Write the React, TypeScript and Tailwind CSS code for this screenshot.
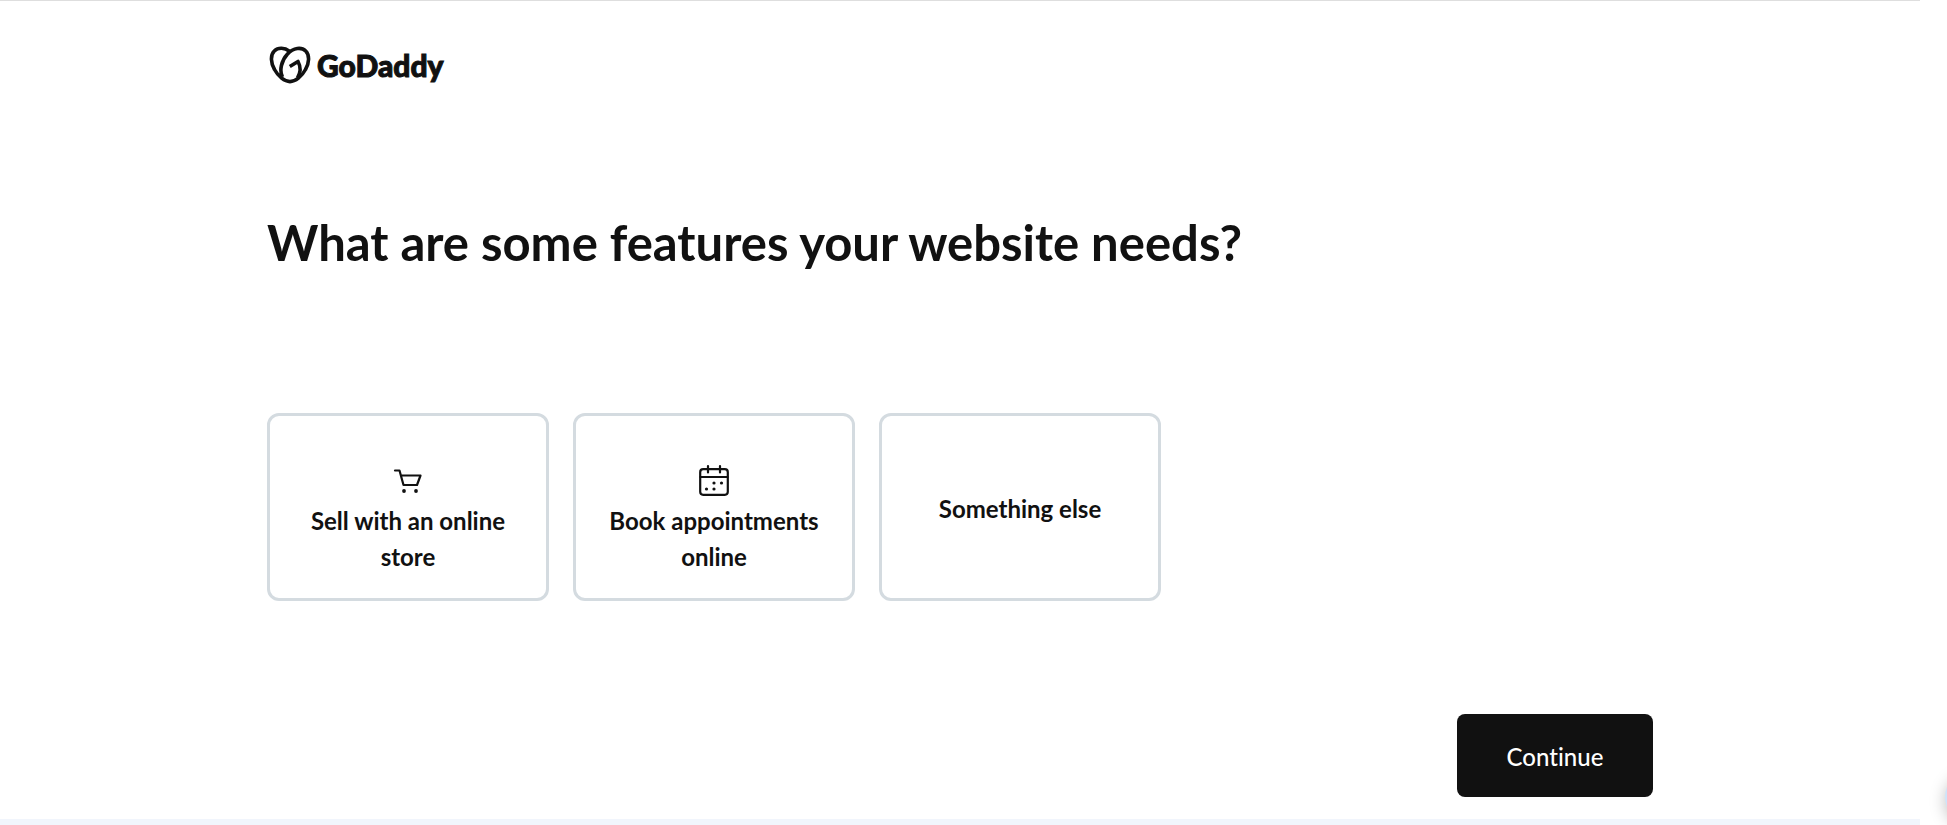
const features = [
  { label: 'Sell with an online store', icon: 'cart' },
  { label: 'Book appointments online', icon: 'calendar' },
  { label: 'Something else', icon: null },
];

function CartIcon() {
  return (
    <svg viewBox="0 0 36 36" className="size-9" fill="none" stroke="currentColor" strokeWidth="2.2" strokeLinecap="round" strokeLinejoin="round" aria-hidden="true">
      <path d="M5 7.500H9.500l4 14.500h13.500L30.500 12.500H11" />
      <circle cx="14" cy="28" r="1.900" fill="currentColor" stroke="none" />
      <circle cx="26" cy="28" r="1.900" fill="currentColor" stroke="none" />
    </svg>
  );
}

function CalendarIcon() {
  return (
    <svg viewBox="0 0 36 36" className="size-9" fill="none" stroke="currentColor" strokeWidth="2.2" strokeLinecap="round" aria-hidden="true">
      <rect x="4.200" y="6.200" width="27.600" height="25.600" rx="3" />
      <path d="M4.500 14h27M12 3v6.500M24 3v6.500" />
      <g fill="currentColor" stroke="none">
        <circle cx="18" cy="20" r="1.600" />
        <circle cx="25.500" cy="20" r="1.600" />
        <circle cx="10.500" cy="26" r="1.600" />
        <circle cx="18" cy="26" r="1.600" />
      </g>
    </svg>
  );
}

function Logo() {
  return (
    <a href="#" className="inline-flex items-center gap-1.5 pl-0.5" aria-label="GoDaddy">
      <svg viewBox="0 0 42 38" className="h-[38px] w-[42px]" fill="none" stroke="currentColor" strokeWidth="3.6" strokeLinejoin="round" aria-hidden="true">
        <path d="M20.500 5.200C15.500 1.500 9 1.300 5.300 5C1.200 9.100 1.700 17 5.500 23.500C9.300 30.500 15.500 35.600 21 35.600C26.500 35.600 32.700 30.500 36.500 23.500C40.300 17 40.800 9.100 36.700 5C32.500 .8 24.500 1.500 18.500 8C12.500 14.500 10 24.500 13.500 31" />
        <path d="M20.800 20.500L29 15.500C32 21 31.500 27 28.500 32" />
      </svg>
      <span className="text-[30px] leading-9 font-black [-webkit-text-stroke:1px_currentColor]">GoDaddy</span>
    </a>
  );
}

export default function App() {
  return (
    <div className="relative flex min-h-screen flex-col overflow-hidden bg-white pr-[27px] font-['Lato',sans-serif] text-[#111111] [font-variant-ligatures:none]">
      <div className="flex grow flex-col border-t border-[#dedede]">
        <div className="mx-auto w-full max-w-[1386px]">
          <header className="flex pt-[45px]">
            <Logo />
          </header>
          <main>
            <h1 className="mt-32 text-[49px] leading-[60px] font-bold">What are some features your website needs?</h1>
            <div className="mt-[141px] flex flex-wrap gap-6">
              {features.map(({ label, icon }) => (
                <button
                  key={label}
                  type="button"
                  className={`flex h-[188px] w-[282px] flex-col items-center justify-center gap-1 rounded-xl border-3 border-[#d4dbe0] px-6 text-2xl leading-9 font-bold ${icon ? 'pt-6' : 'pt-1'}`}
                >
                  {icon === 'cart' && <CartIcon />}
                  {icon === 'calendar' && <CalendarIcon />}
                  <span>{label}</span>
                </button>
              ))}
            </div>
            <div className="mt-[113px] flex justify-end pb-[21px]">
              <button type="button" className="h-[83px] w-[196px] rounded-lg bg-[#111111] pt-0.5 text-2xl font-medium text-white">Continue</button>
            </div>
          </main>
        </div>
      </div>
      <footer className="h-1.5 bg-[#f1f5fc]" />
      <div className="absolute -right-[50px] bottom-0.5 size-[52px] rounded-full bg-[#cfe4fa] shadow-[0_4px_16px_rgba(0,0,0,0.25)]" />
    </div>
  );
}
